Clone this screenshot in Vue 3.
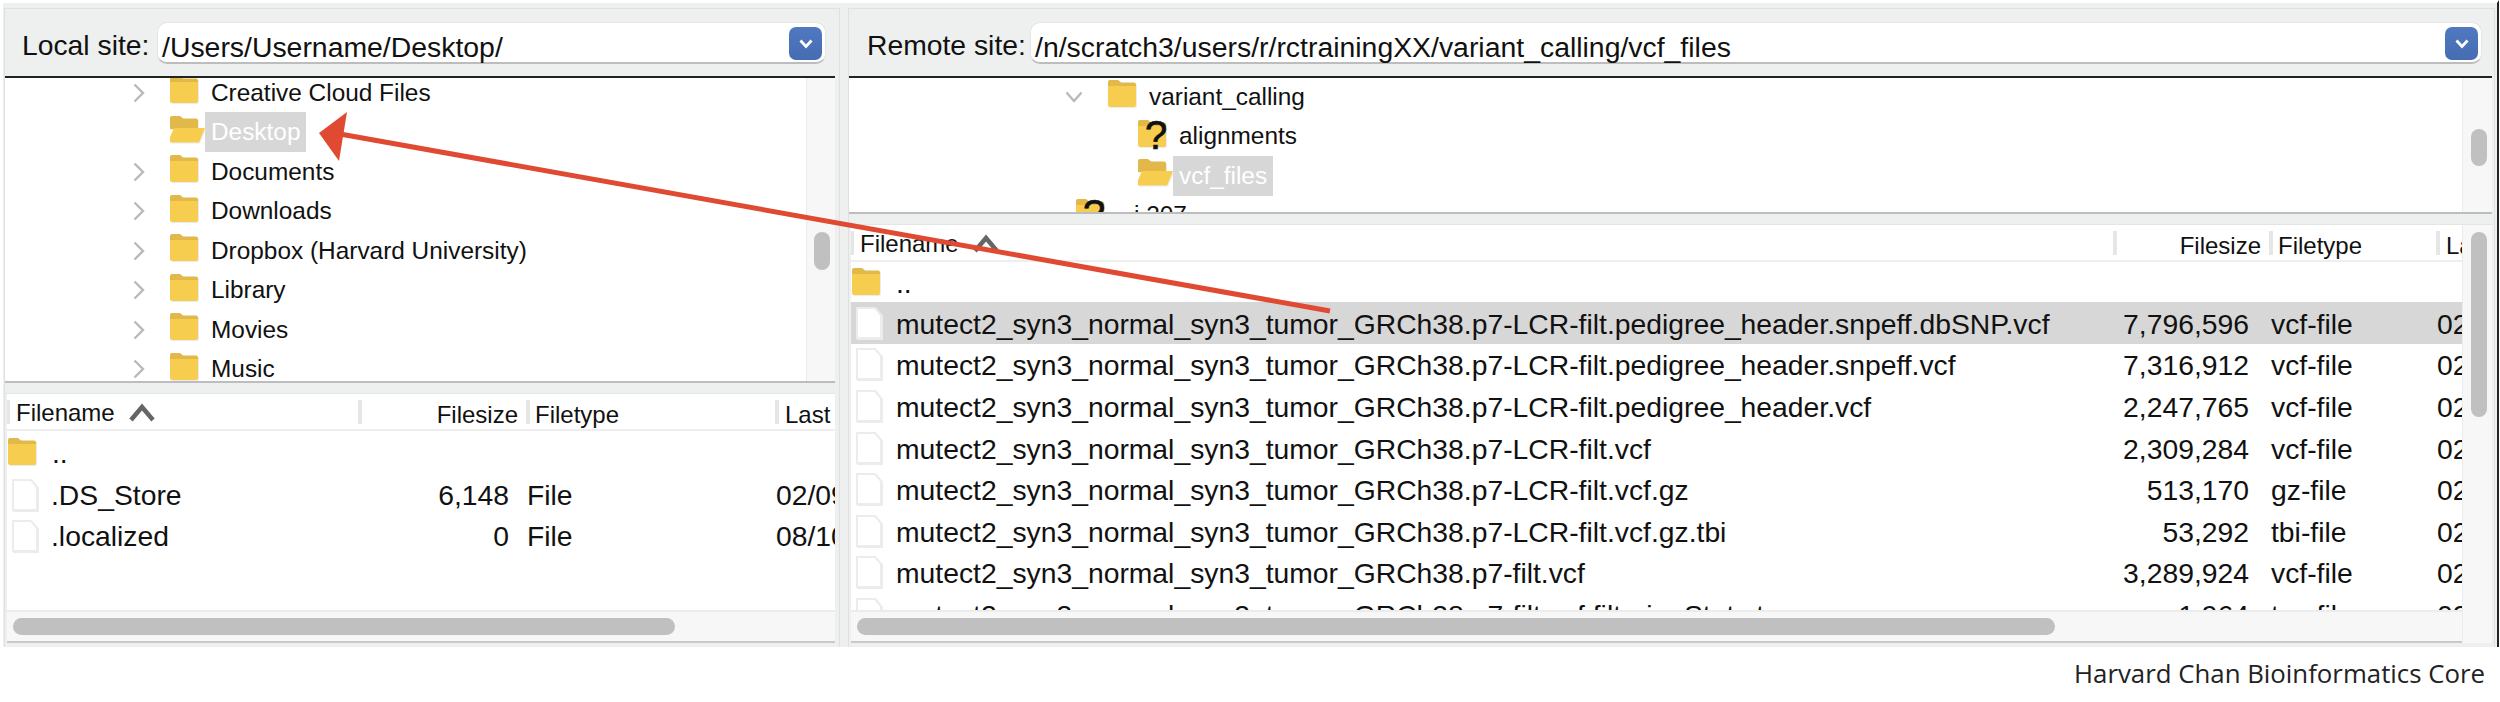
<script setup>
const leftTree = [
  { name: 'Creative Cloud Files', chevron: true },
  { name: 'Desktop', open: true },
  { name: 'Documents', chevron: true },
  { name: 'Downloads', chevron: true },
  { name: 'Dropbox (Harvard University)', chevron: true },
  { name: 'Library', chevron: true },
  { name: 'Movies', chevron: true },
  { name: 'Music', chevron: true },
]
const rightTree = [
  { name: 'variant_calling', chevron: true, depth: 'd1' },
  { name: 'alignments', unknown: true, depth: 'd2' },
  { name: 'vcf_files', open: true, depth: 'd2' },
  { name: 'i 207', unknown: true, depth: 'd0' },
]
const leftFiles = [
  { name: '.DS_Store', size: '6,148', type: 'File', date: '02/09/2021' },
  { name: '.localized', size: '0', type: 'File', date: '08/10/2020' },
]
const base = 'mutect2_syn3_normal_syn3_tumor_GRCh38.p7-'
const rightFiles = [
  { name: base + 'LCR-filt.pedigree_header.snpeff.dbSNP.vcf', size: '7,796,596', type: 'vcf-file', selected: true },
  { name: base + 'LCR-filt.pedigree_header.snpeff.vcf', size: '7,316,912', type: 'vcf-file' },
  { name: base + 'LCR-filt.pedigree_header.vcf', size: '2,247,765', type: 'vcf-file' },
  { name: base + 'LCR-filt.vcf', size: '2,309,284', type: 'vcf-file' },
  { name: base + 'LCR-filt.vcf.gz', size: '513,170', type: 'gz-file' },
  { name: base + 'LCR-filt.vcf.gz.tbi', size: '53,292', type: 'tbi-file' },
  { name: base + 'filt.vcf', size: '3,289,924', type: 'vcf-file' },
  { name: base + 'filt.vcf.filteringStats.tsv', size: '1,964', type: 'tsv-file' },
]
</script>

<template>
  <div class="page">
    <div class="window">
      <!-- Local -->
      <section class="panel local">
        <div class="sitebar">
          <span class="sitelabel">Local site:</span>
          <div class="sitebox local-box">
            <span class="path">/Users/Username/Desktop/</span>
            <span class="drop"><svg width="16" height="12" viewBox="0 0 16 12"><path d="M2.500 2.500 8 8.500l5.500-6" fill="none" stroke="#fff" stroke-width="2.800"/></svg></span>
          </div>
        </div>
        <div class="tree local-tree">
          <div class="tree-rows">
            <div v-for="t in leftTree" :key="t.name" class="tree-row">
              <svg class="chev" width="14" height="26" viewBox="0 0 14 26">
                <path v-if="t.chevron" d="M2.500 4.500 11 13 2.500 21.500" fill="none" stroke="#b9b9b9" stroke-width="2.400"/>
              </svg>
              <svg class="folder" width="36" height="29" viewBox="0 0 36 29">
                <path d="M1 3a2 2 0 0 1 2-2h8l3 2.500h13a2 2 0 0 1 2 2V8H1z" fill="#e3b84a"/>
                <template v-if="t.open">
                  <path d="M1 8h28v6H1z" fill="#e3b84a"/>
                  <path d="M5 13h31l-6 14.500H2a1 1 0 0 1-1-1V22z" fill="#f7cd4f"/>
                </template>
                <path v-else d="M1 7h28v19a2 2 0 0 1-2 2H3a2 2 0 0 1-2-2z" fill="#f7cd4f"/>
              </svg>
              <span class="tree-name" :class="{ hl: t.open }">{{ t.name }}</span>
            </div>
          </div>
          <div class="vtrack"><div class="thumb local-tree-thumb"></div></div>
        </div>
        <div class="gap"></div>
        <div class="list">
          <div class="list-main">
            <div class="list-clip">
              <div class="head local-cols">
                <span class="hcell c-name"><span>Filename</span><svg class="sort" width="28" height="20" viewBox="0 0 28 20"><path d="M3 17 14 4l11 13" fill="none" stroke="#666" stroke-width="4.500"/></svg></span>
                <span class="hcell c-size">Filesize</span>
                <span class="hcell c-type">Filetype</span>
                <span class="hcell c-last">Last</span>
              </div>
              <div class="frow local-cols up">
                <span class="c-name name-cell">
                  <svg class="folder" width="30" height="29" viewBox="0 0 30 29"><path d="M1 3a2 2 0 0 1 2-2h8l3 2.500h13a2 2 0 0 1 2 2V8H1z" fill="#e3b84a"/><path d="M1 7h28v19a2 2 0 0 1-2 2H3a2 2 0 0 1-2-2z" fill="#f7cd4f"/></svg>
                  <span class="fname">..</span>
                </span>
              </div>
              <div v-for="f in leftFiles" :key="f.name" class="frow local-cols">
                <span class="c-name name-cell">
                  <svg class="file" width="28" height="34" viewBox="0 0 28 34"><path d="M2 2h18l6 7v23H2z" fill="#fff" stroke="#ececec" stroke-width="2"/></svg>
                  <span class="fname">{{ f.name }}</span>
                </span>
                <span class="c-size val">{{ f.size }}</span>
                <span class="c-type val">{{ f.type }}</span>
                <span class="c-last val">{{ f.date }}</span>
              </div>
            </div>
            <div class="htrack"><div class="thumb local-hthumb"></div></div>
          </div>
        </div>
      </section>

      <!-- Remote -->
      <section class="panel remote">
        <div class="sitebar">
          <span class="sitelabel">Remote site:</span>
          <div class="sitebox remote-box">
            <span class="path">/n/scratch3/users/r/rctrainingXX/variant_calling/vcf_files</span>
            <span class="drop"><svg width="16" height="12" viewBox="0 0 16 12"><path d="M2.500 2.500 8 8.500l5.500-6" fill="none" stroke="#fff" stroke-width="2.800"/></svg></span>
          </div>
        </div>
        <div class="tree remote-tree">
          <div class="tree-rows">
            <div v-for="t in rightTree" :key="t.name" class="tree-row" :class="t.depth">
              <svg v-if="t.chevron" class="chev" width="18" height="26" viewBox="0 0 18 26">
                <path d="M1.500 8.500 9 17l7.500-8.500" fill="none" stroke="#b9b9b9" stroke-width="2.400"/>
              </svg>
              <svg class="folder" width="36" height="29" viewBox="0 0 36 29">
                <path d="M1 3a2 2 0 0 1 2-2h8l3 2.500h13a2 2 0 0 1 2 2V8H1z" fill="#e3b84a"/>
                <template v-if="t.open">
                  <path d="M1 8h28v6H1z" fill="#e3b84a"/>
                  <path d="M5 13h31l-6 14.500H2a1 1 0 0 1-1-1V22z" fill="#f7cd4f"/>
                </template>
                <path v-else d="M1 7h28v19a2 2 0 0 1-2 2H3a2 2 0 0 1-2-2z" fill="#f7cd4f"/>
              </svg>
              <span v-if="t.unknown" class="question">?</span>
              <span class="tree-name" :class="{ hl: t.open }">{{ t.name }}</span>
            </div>
          </div>
          <div class="vtrack"><div class="thumb remote-tree-thumb"></div></div>
        </div>
        <div class="gap"></div>
        <div class="list">
          <div class="list-main">
            <div class="list-clip">
              <div class="head remote-cols">
                <span class="hcell c-name"><span>Filename</span><svg class="sort" width="28" height="20" viewBox="0 0 28 20"><path d="M3 17 14 4l11 13" fill="none" stroke="#666" stroke-width="4.500"/></svg></span>
                <span class="hcell c-size">Filesize</span>
                <span class="hcell c-type">Filetype</span>
                <span class="hcell c-last">Last</span>
              </div>
              <div class="frow remote-cols up">
                <span class="c-name name-cell">
                  <svg class="folder" width="30" height="29" viewBox="0 0 30 29"><path d="M1 3a2 2 0 0 1 2-2h8l3 2.500h13a2 2 0 0 1 2 2V8H1z" fill="#e3b84a"/><path d="M1 7h28v19a2 2 0 0 1-2 2H3a2 2 0 0 1-2-2z" fill="#f7cd4f"/></svg>
                  <span class="fname">..</span>
                </span>
              </div>
              <div v-for="f in rightFiles" :key="f.name" class="frow remote-cols" :class="{ selected: f.selected }">
                <span class="c-name name-cell">
                  <svg class="file" width="28" height="34" viewBox="0 0 28 34"><path d="M2 2h18l6 7v23H2z" fill="#fff" stroke="#ececec" stroke-width="2"/></svg>
                  <span class="fname">{{ f.name }}</span>
                </span>
                <span class="c-size val">{{ f.size }}</span>
                <span class="c-type val">{{ f.type }}</span>
                <span class="c-last val">02/09/2021</span>
              </div>
            </div>
            <div class="htrack"><div class="thumb remote-hthumb"></div></div>
          </div>
          <div class="vtrack list-v"><div class="thumb remote-list-thumb"></div></div>
        </div>
      </section>

      <svg class="arrow" width="2500" height="702" viewBox="0 0 2500 702">
        <path d="M1330 311 340 134" stroke="#e04a32" stroke-width="5" fill="none"/>
        <path d="M319 133 347 112 339 161z" fill="#e04a32"/>
      </svg>
    </div>
    <div class="credit">Harvard Chan Bioinformatics Core</div>
  </div>
</template>

<style>
html, body { margin: 0; background: #fff; }
</style>

<style scoped>
.page { width: 2500px; height: 702px; overflow: hidden; font-family: "Liberation Sans", Arial, sans-serif; color: #111; background: #fff; }
.window { position: relative; height: 647px; margin-left: 3px; padding: 5px 0 0 1px; box-sizing: border-box; width: 2496px; background: #eef0f0; border-top: 3px solid #fff; display: grid; grid-template-columns: 836px 1647px; column-gap: 8px; border-right: 2px solid #222; }
.panel { display: flex; flex-direction: column; min-width: 0; height: 639px; border: 1px solid #dfe1e1; border-bottom: 0; box-sizing: border-box; padding-bottom: 4px; }
.local { padding-right: 4px; }
.remote { padding-right: 2px; }
.sitebar { height: 67px; display: flex; align-items: flex-start; border-bottom: 2px solid #222; flex: none; }
.sitelabel { font-size: 28.300px; line-height: 32px; margin-top: 20px; white-space: nowrap; flex: none; }
.local .sitelabel { margin-left: 17px; width: 135px; }
.remote .sitelabel { margin-left: 18px; width: 163px; }
.sitebox { height: 42px; margin-top: 13px; background: #fff; border-radius: 10px; border: 1px solid #e4e4e4; border-bottom: 2px solid #bdbdbd; display: flex; align-items: center; box-sizing: border-box; position: relative; flex: none; }
.local-box { width: 669px; }
.remote-box { width: 1452px; }
.path { font-size: 28.400px; padding: 9px 0 0 4px; line-height: 36px; white-space: nowrap; }
.drop { position: absolute; right: 3px; top: 4px; width: 33px; height: 33px; border-radius: 7px; background: linear-gradient(#5079bf, #466cb2); display: flex; align-items: center; justify-content: center; }

.tree { display: flex; flex: none; background: #fff; border-bottom: 2px solid #bdbdbd; overflow: hidden; box-sizing: border-box; }
.local-tree { height: 305px; }
.remote-tree { height: 136px; }
.tree-rows { flex: 1; min-width: 0; overflow: hidden; }
.local-tree .tree-rows { margin-top: -5px; }
.remote-tree .tree-rows { margin-top: -1px; }
.tree-row { height: 39.500px; display: flex; align-items: center; position: relative; }
.local-tree .tree-row { padding-left: 127px; }
.local-tree .folder { margin-left: 23px; }
.tree-name { font-size: 24.400px; line-height: 40px; padding: 0 6px; white-space: nowrap; }
.hl { background: #d7d7d7; color: #fff; }
.chev { flex: none; }
.folder, .file { flex: none; filter: drop-shadow(1px 1px 0 #ececec); }
.tree-row .folder { margin-bottom: 6px; }
.remote-tree .d1 { padding-left: 216px; }
.remote-tree .d1 .folder { margin-left: 24px; }
.remote-tree .d2 { padding-left: 288px; }
.remote-tree .d0 { padding-left: 226px; }
.remote-tree .d0 .tree-name { margin-left: 17px; }
.question { position: absolute; font-size: 40px; line-height: 40px; color: #111; -webkit-text-stroke: 0.700px #111; top: -2px; }
.d2 .question { left: 296px; }
.d0 .question { left: 234px; }
.vtrack { flex: none; background: #f7f7f7; border-left: 1px solid #ececec; box-sizing: border-box; position: relative; }
.local-tree .vtrack { width: 29px; }
.remote-tree .vtrack, .list-v { width: 30px; }
.thumb { background: #c0c0c0; border-radius: 9px; position: absolute; }
.local-tree-thumb { left: 7px; top: 154px; width: 16px; height: 38px; }
.remote-tree-thumb { left: 8px; top: 51px; width: 16px; height: 37px; }

.gap { height: 10px; flex: none; border-bottom: 1px solid #e3e5e5; background: #eef0f0; }
.list { flex: 1; display: flex; min-height: 0; margin-left: 2px; }
.list-main { flex: 1; min-width: 0; display: flex; flex-direction: column; }
.list-clip { flex: 1; min-height: 0; overflow: hidden; background: #fff; }
.head { height: 35px; align-items: center; border-bottom: 2px solid #eee; }
.local-cols { display: grid; grid-template-columns: 351px 168px 249px 60px; }
.remote-cols { display: grid; grid-template-columns: 1262px 156px 167px 26px; }
.hcell { font-size: 24px; white-space: nowrap; height: 24px; line-height: 30px; border-left: 4px solid #e6e6e6; box-sizing: border-box; }
.c-name { display: flex; align-items: center; }
.hcell.c-name { padding-left: 6px; gap: 13px; border-left-width: 3px; height: 24px; padding-top: 2px; }
.hcell.c-size { text-align: right; padding-right: 8px; }
.hcell.c-type { padding-left: 5px; }
.hcell.c-last { padding-left: 6px; overflow: hidden; height: 24px; }
.frow { height: 41.600px; align-items: center; }
.up { height: 40px; }
.local-cols.up { height: 43px; }
.selected { background: #d7d7d7; }
.name-cell { min-width: 0; }
.fname { font-size: 28.300px; line-height: 36px; white-space: nowrap; }
.name-cell .folder { margin-bottom: 2px; }
.name-cell .file { margin-left: 4px; }
.name-cell .file + .fname { margin-left: 13px; }
.local-cols .name-cell .file + .fname { margin-left: 12px; }
.name-cell .folder + .fname { margin-left: 15px; }
.val { font-size: 28.300px; line-height: 36px; white-space: nowrap; overflow: hidden; }
.remote-cols .fname, .remote-cols .val { padding-top: 2px; }
.c-size.val { text-align: right; padding-right: 17px; }
.remote-cols .c-size.val { padding-right: 20px; }
.c-type.val { padding-left: 1px; }
.remote-cols .c-type.val { padding-left: 2px; }
.c-last.val { padding-left: 1px; }

.htrack { height: 33px; flex: none; background: #f7f7f7; border-top: 2px solid #ececec; border-bottom: 2px solid #c9c9c9; box-sizing: border-box; position: relative; }
.local-hthumb { left: 6px; top: 6px; width: 662px; height: 17px; }
.remote-hthumb { left: 6px; top: 6px; width: 1198px; height: 17px; }
.remote-list-thumb { left: 8px; top: 7px; width: 16px; height: 185px; }

.arrow { position: absolute; left: -3px; top: -3px; pointer-events: none; }
.credit { text-align: right; padding-right: 15px; font-family: "Open Sans", sans-serif; font-size: 25.800px; line-height: 52px; color: #222; }
</style>
